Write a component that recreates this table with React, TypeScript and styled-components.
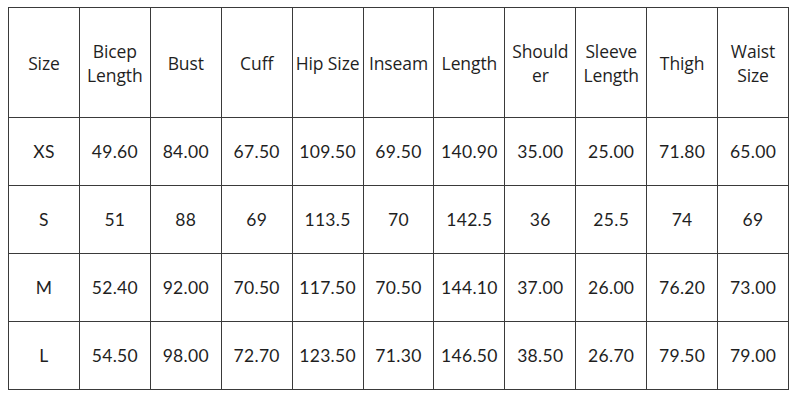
import React from 'react';
import styled, { createGlobalStyle } from 'styled-components';

// "Shoulder" is split the way the source chart breaks it
const headers = [
  'Size',
  'Bicep Length',
  'Bust',
  'Cuff',
  'Hip Size',
  'Inseam',
  'Length',
  'Should\ner',
  'Sleeve Length',
  'Thigh',
  'Waist Size',
];

const rows = [
  ['XS', '49.60', '84.00', '67.50', '109.50', '69.50', '140.90', '35.00', '25.00', '71.80', '65.00'],
  ['S', '51', '88', '69', '113.5', '70', '142.5', '36', '25.5', '74', '69'],
  ['M', '52.40', '92.00', '70.50', '117.50', '70.50', '144.10', '37.00', '26.00', '76.20', '73.00'],
  ['L', '54.50', '98.00', '72.70', '123.50', '71.30', '146.50', '38.50', '26.70', '79.50', '79.00'],
];

const GlobalStyle = createGlobalStyle`
  body {
    margin: 0;
    background: #ffffff;
    font-family: "Open Sans", "Noto Sans", sans-serif;
    color: #1f1f1f;
  }
`;

const Page = styled.div`
  padding: 7px 0 0 8px;
`;

const Table = styled.table`
  width: 781px;
  border-collapse: collapse;
  table-layout: fixed;
  border: 1px solid #3a3a3a;
`;

const HeadCell = styled.th`
  height: 109px;
  padding: 0 1px;
  border: 1px solid #3a3a3a;
  font-weight: 400;
  font-size: 17.5px;
  line-height: 24px;
  text-align: center;
  vertical-align: middle;
  white-space: pre-line;
  letter-spacing: -0.1px;
`;

const Cell = styled.td`
  height: 67px;
  padding: 0;
  border: 1px solid #3a3a3a;
  font-family: "Lato", "Open Sans", sans-serif;
  font-size: 17.5px;
  text-align: center;
  vertical-align: middle;
  letter-spacing: 0.3px;
`;

const App: React.FC = () => {
  return (
    <Page>
      <GlobalStyle />
      <Table>
        <thead>
          <tr>
            {headers.map((h) => (
              <HeadCell key={h}>{h}</HeadCell>
            ))}
          </tr>
        </thead>
        <tbody>
          {rows.map((r) => (
            <tr key={r[0]}>
              {r.map((v, i) => (
                <Cell key={i}>{v}</Cell>
              ))}
            </tr>
          ))}
        </tbody>
      </Table>
    </Page>
  );
};

export default App;
